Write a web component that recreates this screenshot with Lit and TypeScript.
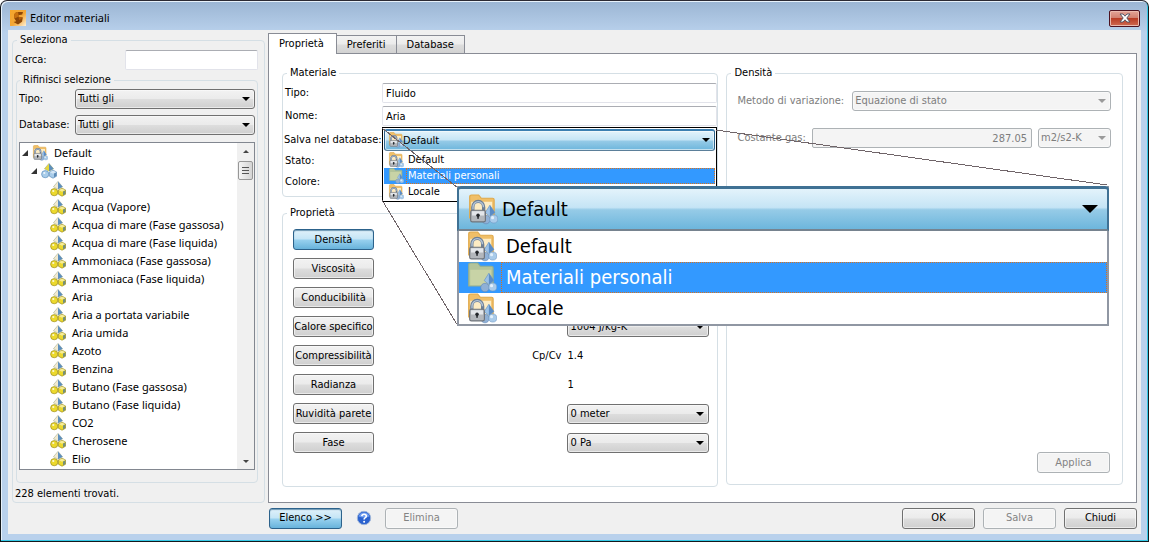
import { LitElement, html, css, svg, nothing } from 'lit';
import { customElement } from 'lit/decorators.js';
import { classMap } from 'lit/directives/class-map.js';

const folderShape = (plain: boolean) => svg`
  <path d="M1.4 1.6 Q1.4 .5 2.4 .5 H6 L7.4 2.2 H13.2 Q14 2.2 14 3 V12.4 H1.4 Z" fill=${plain ? '#b3c49a' : '#f0bf68'} stroke=${plain ? '#93ae90' : '#e0a94a'} stroke-width=".6"/>
  <path d="M2.2 4 H13 V12 H2.2 Z" fill=${plain ? '#c8d3a6' : '#fdecc4'}/>`;

const blueShapes = svg`
  <path d="M11.8 5.8 L14.4 9.6 L11.8 11.6 L9.4 9.6 Z" fill="#9cc2e8" stroke="#5d8cc0" stroke-width=".3"/>
  <path d="M11.8 5.8 L14.4 9.6 L11.8 11.6 Z" fill="#5b8cc4"/>
  <circle cx="9.8" cy="13.2" r="2.2" fill="#8fb0d6" stroke="#5f86b5" stroke-width=".3"/>
  <circle cx="13.8" cy="12.9" r="2.1" fill="#a9cbea" stroke="#6e97c4" stroke-width=".3"/>
  <circle cx="13.2" cy="12.2" r=".8" fill="#e3f0fb"/>`;

const lockIcon = html`<svg class="ico" viewBox="0 0 16 16" aria-hidden="true">
  ${folderShape(false)}${blueShapes}
  <path d="M3 8.8 V6.8 a2.8 3 0 0 1 5.6 0 V8.8" fill="none" stroke="#6d7f95" stroke-width="1.7"/>
  <path d="M3.1 8 V6.8 a2.7 2.9 0 0 1 5.4 0" fill="none" stroke="#b4c5d8" stroke-width=".7"/>
  <rect x="1.9" y="8.4" width="7.6" height="6" rx=".9" fill="#b3b7bc" stroke="#6f747b" stroke-width=".6"/>
  <rect x="2.6" y="8.9" width="6.2" height="2.2" fill="#e3e6ea"/>
  <circle cx="5.7" cy="11" r=".9" fill="#23262b"/><rect x="5.3" y="11" width=".8" height="1.8" fill="#23262b"/>
</svg>`;

const folderIcon = html`<svg class="ico" viewBox="0 0 16 16" aria-hidden="true">${folderShape(true)}${blueShapes}</svg>`;

const shapesIcon = (ball: string, edge: string, face: string) => html`<svg class="ico" viewBox="0 0 16 16" aria-hidden="true">
  <path d="M8 .4 L12.6 5.8 L8 8.2 L3.4 5.8 Z" fill=${face} stroke="#9aa27c" stroke-width=".5"/>
  <path d="M8 .4 L12.6 5.8 L8 8.2 Z" fill="#5d8fbe"/>
  <circle cx="4.2" cy="11.2" r="3.6" fill=${ball} stroke=${edge} stroke-width=".7"/>
  <circle cx="3.3" cy="10" r="1.1" fill="#fff" opacity=".8"/>
  <path d="M12 7.2 L15.6 9 V13.2 L12 15.2 L8.4 13.2 V9 Z" fill=${ball} stroke=${edge} stroke-width=".7"/>
  <path d="M8.7 9.1 L12 7.5 L15.3 9.1 L12 10.8 Z" fill="#fff" opacity=".5"/>
  <path d="M13 10.6 L15.3 9.4 V13 L13 14.3 Z" fill="#3f6fa0" opacity=".7"/>
</svg>`;
const groupIcon = shapesIcon('#a9cdea', '#5f8fbd', '#e5d83f');
const itemIcon = shapesIcon('#ecd92c', '#9c8d1e', '#f2ead0');

const menu = [
  { name: 'Default', icon: lockIcon },
  { name: 'Materiali personali', icon: folderIcon, active: true },
  { name: 'Locale', icon: lockIcon },
];

const materials = [
  'Acqua', 'Acqua (Vapore)', 'Acqua di mare (Fase gassosa)', 'Acqua di mare (Fase liquida)',
  'Ammoniaca (Fase gassosa)', 'Ammoniaca (Fase liquida)', 'Aria', 'Aria a portata variabile',
  'Aria umida', 'Azoto', 'Benzina', 'Butano (Fase gassosa)', 'Butano (Fase liquida)',
  'CO2', 'Cherosene', 'Elio',
];

const properties: { name: string; on?: boolean; label?: string; value?: string; unit?: string }[] = [
  { name: 'Densità', on: true },
  { name: 'Viscosità' },
  { name: 'Conducibilità' },
  { name: 'Calore specifico', unit: '1004 J/kg-K' },
  { name: 'Compressibilità', label: 'Cp/Cv', value: '1.4' },
  { name: 'Radianza', value: '1' },
  { name: 'Ruvidità parete', unit: '0 meter' },
  { name: 'Fase', unit: '0 Pa' },
];

@customElement('app-root')
export class AppRoot extends LitElement {
  static styles = css`
    :host {
      display: block;
      font: 11px/14px 'DejaVu Sans Condensed', 'DejaVu Sans', sans-serif;
      color: #000;
    }
    * { box-sizing: border-box; }
    button, input, select { font: inherit; color: inherit; margin: 0; }
    .window {
      display: flex; flex-direction: column;
      height: 100vh; min-height: 540px;
      border: 1px solid #14181c; border-top-color: #2c2a33; border-radius: 7px 7px 0 0;
      background: linear-gradient(#9bb5d3, #b9d1ec 32px, #b9d1ec);
      box-shadow: inset -1px -1px 0 #35c9e6, inset 1px 1px 0 #e8f2fb;
      padding: 0 7px 7px;
    }
    .titlebar { display: flex; align-items: center; gap: 4px; height: 29px; padding: 5px 1px 0 2px; font: 11px/16px 'Noto Sans', sans-serif; }
    .titlebar .logo { width: 16px; height: 16px; }
    .titlebar h1 { flex: 1; margin: 0; font: inherit; }
    .close {
      width: 31px; height: 17px; padding: 0; display: grid; place-items: center;
      border: 1px solid #4d1220; border-radius: 2px;
      background: linear-gradient(#e3a598, #d17f70 47%, #b93d26 50%, #cf6a52);
      box-shadow: inset 0 0 0 1px #eab9ae;
    }
    .close svg { width: 12px; height: 10px; }
    .body { flex: 1; min-height: 0; display: grid; grid-template-columns: 253px minmax(0, 1fr); column-gap: 3px; grid-template-rows: minmax(0, 1fr) 31px; background: #f0f0f0; padding: 0 4px; }

    fieldset { min-width: 0; margin: 0; padding: 0; border: 1px solid #d5dfe5; border-radius: 4px; }
    legend { margin-left: 4px; padding: 0 3px; }
    .stack { display: flex; flex-direction: column; }
    .row { display: flex; align-items: center; }

    .side { padding-top: 3px; min-height: 0; }
    .side .outer { flex: 1; min-height: 0; }
    .search { justify-content: space-between; padding: 3px 6px 3px 2px; }
    .search input { width: 133px; height: 20px; }
    .inner { flex: 1; min-height: 0; margin: 0 6px 0 3px; padding: 0 2px 12px; }
    .inner legend { margin-left: 1px; }
    .filter { justify-content: space-between; margin-bottom: 6px; }
    .filter.first { margin-top: 2px; }
    .filter .select { width: 180px; }
    .filter:nth-of-type(2) { margin-bottom: 7px; }
    .count { padding: 4px 2px 1px; }

    .text { border: 1px solid #e2e3ea; border-top-color: #abadb3; border-radius: 2px; background: #fff; padding: 1px 3px; }
    .select { position: relative; display: block; height: 20px; }
    .select select {
      appearance: none; display: block; width: 100%; height: 100%; padding: 0 16px 0 2px;
      border: 1px solid #707070; border-radius: 3px;
      background: linear-gradient(#f2f2f2, #ebebeb 48%, #dddddd 52%, #cfcfcf);
      box-shadow: inset 0 0 0 1px #fcfcfc99;
    }
    .select::after {
      content: ''; position: absolute; right: 5px; top: 8px;
      border: 4px solid transparent; border-top-color: #000; border-bottom: 0;
      pointer-events: none;
    }
    .select.off { color: #7d7d7d; }
    .select.off select { opacity: 1; color: #7d7d7d; background: #f4f4f4; border-color: #adb2b5; }
    .select.off::after { border-top-color: #9a9a9a; }

    .tree { flex: 1; min-height: 0; display: flex; border: 1px solid #828790; background: #fff; }
    .tree ul { list-style: none; margin: 0; padding: 0; }
    .tree .rows { flex: 1; min-width: 0; overflow: hidden; padding: 1px 0 0 2px; font: 11px/18px 'Noto Sans', sans-serif; }
    .node { display: flex; align-items: center; height: 18px; gap: 6px; white-space: nowrap; }
    .node .ico { margin-left: 4px; }
    .tree .rows ul { padding-left: 9px; }
    .tree .rows ul ul { padding-left: 15px; }
    .arrow { width: 6px; height: 6px; margin-right: -6px; }
    .ico { width: 16px; height: 16px; flex: none; display: block; }
    .scroll { width: 17px; display: flex; flex-direction: column; align-items: center; background: #f0f0f0; padding: 7px 0 6px; }
    .up, .down { border: 3px solid transparent; }
    .up { border-top: 0; border-bottom-color: #444; }
    .down { border-bottom: 0; border-top-color: #444; margin-top: auto; }
    .thumb { width: 15px; height: 19px; margin-top: 8px; border: 1px solid #979797; border-radius: 2px; background: linear-gradient(90deg, #f5f5f5, #d4d4d4); display: grid; place-items: center; }
    .thumb i { width: 7px; height: 8px; background: repeating-linear-gradient(#555 0 1px, transparent 1px 3px); }

    .main { display: flex; flex-direction: column; min-height: 0; padding-top: 3px; }
    .tabs { display: flex; align-items: flex-end; height: 21px; z-index: 1; }
    .tab { height: 18px; padding: 0 10px; border: 1px solid #898c95; border-left-width: 0; border-bottom: 0; background: linear-gradient(#f3f3f3, #ebebeb 48%, #dddddd 52%, #d2d2d2); margin-bottom: 1px; }
    .tab.on { height: 21px; margin: 0; padding: 0 12px 0 10px; border-left-width: 1px; background: #fff; }
    .panel { flex: 1; min-height: 0; margin-top: -1px; display: grid; grid-template-columns: 437fr 397fr; column-gap: 8px; border: 1px solid #898c95; background: #fff; padding: 12px 13px 15px; }
    .left { display: flex; flex-direction: column; gap: 9px; min-height: 0; }

    .material { height: 131px; flex: none; padding-top: 3px; }
    .material .grid { display: grid; grid-template-columns: 99px minmax(0, 1fr); grid-template-rows: 23px 21px 24px 21px 21px; align-items: start; }
    .material label, .material .lab { padding-left: 2px; line-height: 20px; white-space: nowrap; }
    .material .for-combo { padding-left: 1px; line-height: 26px; }
    .material .text { width: 100%; height: 20px; }
    .combo { position: relative; z-index: 2; height: 24px; padding: 1px; border: 1px solid #000; border-bottom: 0; }
    .combo .select { height: 22px; }
    .combo .select select {
      padding-left: 18px; border-color: #3c7fb1 #2c628b #5b7f99; border-width: 2px 1px 1px;
      background: linear-gradient(#e3f3fb, #c5e4f5 48%, #96cbe7 52%, #6db6dc);
    }
    .combo .select::after { top: 9px; }
    .combo > .select > .ico { position: absolute; left: 4px; top: 3px; pointer-events: none; }
    .menu { list-style: none; margin: 0; padding: 0; background: #fff; }
    .small { position: absolute; left: -1px; right: -1px; top: 23px; border: 1px solid #000; border-top: 0; padding: 1px; }
    .menu li { display: flex; align-items: center; }
    .small li { height: 16px; padding-left: 4px; gap: 2px; }
    .menu li span { flex: 1; border: 1px dotted transparent; }
    .small li span { padding: 0 1px; line-height: 14px; }
    .menu li.on { background: #3399ff; color: #fff; }
    .menu li.on span { border-color: #d9721c; }
    .lines { position: absolute; left: -1px; top: -1px; width: 728px; height: 200px; pointer-events: none; z-index: 3; }
    .zoomed { position: absolute; left: 74px; top: 58px; width: 652px; z-index: 4; font-size: 20px; line-height: 26px; border: 2px solid #9097a3; border-top: 0; background: #fff; }
    .zoomed .head {
      display: flex; align-items: center; gap: 4px; margin: 0 -2px; height: 45px; padding: 0 9px 0 8px;
      border: 2px solid #3f7194; border-top-width: 3px; border-bottom: 2px solid #76838f; border-radius: 4px 4px 0 0;
      background: linear-gradient(#e3f3fb, #c5e4f5 46%, #96cbe7 52%, #6db6dc);
    }
    .zoomed .head span { flex: 1; }
    .zoomed .head::after { content: ''; border: 8px solid transparent; border-top-color: #000; border-bottom: 0; }
    .zoomed .ico { width: 31px; height: 31px; }
    .zoomed li { height: 31px; padding-left: 7px; gap: 4px; }
    .zoomed li span { padding-left: 4px; line-height: 29px; height: 31px; }

    .props { flex: 1; min-height: 0; }
    .prop { display: grid; grid-template-columns: 81px minmax(0, 1fr) 142px; align-items: center; height: 21px; margin-bottom: 8px; padding: 0 8px 0 10px; }
    .props .prop:nth-of-type(1) { margin-top: 9px; }
    .prop .tag { text-align: right; padding-right: 6px; }

    .btn { height: 21px; padding: 0; text-align: center; white-space: nowrap; border: 1px solid #707070; border-radius: 3px; background: linear-gradient(#f2f2f2, #ebebeb 48%, #dddddd 52%, #cfcfcf); box-shadow: inset 0 0 0 1px #fcfcfc99; }
    .btn.hot { border-color: #2c628b; background: linear-gradient(#e0f1fa, #c4e5f6 48%, #98d1ef 52%, #68b3db); box-shadow: inset 0 1px 1px #6d97b3; }
    .btn:disabled { color: #838383; border-color: #adb2b5; background: #f4f4f4; }

    .density { display: flex; flex-direction: column; margin-bottom: 2px; color: #7d7d7d; }
    .density legend { color: #000; }
    .density .row { padding: 0 11px 0 10px; }
    .method { margin-top: 11px; gap: 8px; }
    .method .select { flex: 1; }
    .gas { margin-top: 17px; gap: 6px; }
    .gas input { flex: 1; min-width: 0; height: 20px; text-align: right; color: #7d7d7d; background: #f4f4f4; border: 1px solid #adb2b5; border-radius: 2px; padding: 0 4px; }
    .gas .select { width: 73px; }
    .density .end { margin-top: auto; justify-content: flex-end; padding: 0 12px 11px; }
    .wide { width: 73px; }

    .foot { grid-column: 2; display: flex; align-items: center; gap: 8px; padding: 0 0 1px 1px; }
    .foot .help { width: 16px; height: 16px; margin: 0 5px 0 6px; padding: 0; border: 0; background: none; display: block; }
    .foot .gap { flex: 1; }
    .help svg { display: block; width: 16px; height: 16px; }
  `;

  private select(id: string, value: string, cls = '', label = '', icon: unknown = nothing) {
    const off = cls === 'off';
    return html`<span class=${classMap({ select: true, off })}>
      <select id=${id} ?disabled=${off} aria-label=${label || nothing}><option>${value}</option></select>${icon}
    </span>`;
  }

  private menuList(cls: string) {
    return html`<ul class="menu ${cls}" role="listbox" aria-label="Salva nel database">
      ${menu.map((m) => html`<li role="option" aria-selected=${m.active ? 'true' : 'false'} class=${classMap({ on: !!m.active })}>${m.icon}<span>${m.name}</span></li>`)}
    </ul>`;
  }

  private sidebar() {
    const arrow = html`<svg class="arrow" viewBox="0 0 6 6" aria-hidden="true"><path d="M6 0 V6 H0 Z" fill="#333"/></svg>`;
    return html`<aside class="side stack">
      <fieldset class="outer stack">
        <legend>Seleziona</legend>
        <div class="row search"><label for="search">Cerca:</label><input id="search" class="text" type="text" /></div>
        <fieldset class="inner stack">
          <legend>Rifinisci selezione</legend>
          <div class="row filter first"><label for="ftype">Tipo:</label>${this.select('ftype', 'Tutti gli')}</div>
          <div class="row filter"><label for="fdb">Database:</label>${this.select('fdb', 'Tutti gli')}</div>
          <div class="tree">
            <ul class="rows" role="tree">
              <li role="treeitem"><div class="node">${arrow}${lockIcon}<span>Default</span></div>
                <ul role="group"><li role="treeitem"><div class="node">${arrow}${groupIcon}<span>Fluido</span></div>
                  <ul role="group">
                    ${materials.map((m) => html`<li class="node" role="treeitem">${itemIcon}<span>${m}</span></li>`)}
                    <li class="node" aria-hidden="true">${itemIcon}</li>
                  </ul></li></ul>
              </li>
            </ul>
            <div class="scroll"><i class="up"></i><div class="thumb"><i></i></div><i class="down"></i></div>
          </div>
        </fieldset>
        <div class="count">228 elementi trovati.</div>
      </fieldset>
    </aside>`;
  }

  private material() {
    return html`<fieldset class="material">
      <legend>Materiale</legend>
      <div class="grid">
        <label for="type">Tipo:</label><input id="type" class="text" type="text" value="Fluido" />
        <label for="name">Nome:</label><input id="name" class="text" type="text" value="Aria" />
        <label class="for-combo" for="db">Salva nel database:</label>
        <div class="combo">
          ${this.select('db', 'Default', '', '', lockIcon)}
          ${this.menuList('small')}
          <svg class="lines" viewBox="0 0 728 200" aria-hidden="true">
            <g stroke="#6f6468" stroke-width="1" fill="none" shape-rendering="crispEdges">
              <path d="M0 1 L76 61 M0 73 L76 199 M334 3 L725 58"/>
            </g>
          </svg>
          <div class="zoomed">
            <div class="head">${lockIcon}<span>Default</span></div>
            ${this.menuList('')}
          </div>
        </div>
        <span class="lab">Stato:</span><span></span>
        <span class="lab">Colore:</span><span></span>
      </div>
    </fieldset>`;
  }

  render() {
    return html`<div class="window">
      <header class="titlebar">
        <svg class="logo" viewBox="0 0 16 16" aria-hidden="true">
          <defs><linearGradient id="lg" x1="0" y1="0" x2="1" y2="1"><stop offset="0" stop-color="#f6a62a"/><stop offset=".55" stop-color="#f3a737"/><stop offset="1" stop-color="#fff1d6"/></linearGradient></defs>
          <rect width="16" height="16" fill="url(#lg)"/>
          <path d="M4.2 5.6 Q4.4 2.2 8 2 H13 L12.2 4.6 L8.6 5.2 L8.4 6.8 L12.8 7.4 L12 11.8 L8 14.6 L3.6 12 L6.2 11.2 L4.4 8.6 Z" fill="#8d4706"/>
          <path d="M4.2 5.6 Q4.4 2.2 8 2 L8.6 5.2 L8.4 6.8 L4.4 8.6 Z" fill="#c8700f"/>
          <path d="M8.4 6.8 L12.8 7.4 L9.4 10.2 Z" fill="#b65f0a"/>
        </svg>
        <h1>Editor materiali</h1>
        <button class="close" aria-label="Chiudi finestra"><svg viewBox="0 0 12 10" aria-hidden="true"><path d="M1 1 H4 L6 3.2 L8 1 H11 L7.8 5 L11 9 H8 L6 6.8 L4 9 H1 L4.2 5 Z" fill="#fff" stroke="#545667" stroke-width="1"/></svg></button>
      </header>
      <div class="body">
        ${this.sidebar()}
        <main class="main">
          <div class="tabs" role="tablist">
            <button class="tab on" role="tab" aria-selected="true">Proprietà</button>
            <button class="tab" role="tab" aria-selected="false">Preferiti</button>
            <button class="tab" role="tab" aria-selected="false">Database</button>
          </div>
          <section class="panel">
            <div class="left">
              ${this.material()}
              <fieldset class="props">
                <legend>Proprietà</legend>
                ${properties.map((p) => html`<div class="prop">
                  <button class=${classMap({ btn: true, hot: !!p.on })}>${p.name}</button>
                  <span class="tag">${p.label ?? nothing}</span>
                  ${p.unit ? this.select('u-' + p.name[0], p.unit, '', p.name) : html`<span>${p.value ?? nothing}</span>`}
                </div>`)}
              </fieldset>
            </div>
            <fieldset class="density">
              <legend>Densità</legend>
              <div class="row method"><label for="method">Metodo di variazione:</label>${this.select('method', 'Equazione di stato', 'off')}</div>
              <div class="row gas"><label for="gas">Costante gas:</label><input id="gas" type="text" value="287.05" disabled />${this.select('gasunit', 'm2/s2-K', 'off', 'Unità')}</div>
              <div class="row end"><button class="btn wide" disabled>Applica</button></div>
            </fieldset>
          </section>
        </main>
        <footer class="foot">
          <button class="btn hot wide">Elenco &gt;&gt;</button>
          <button class="help" aria-label="Guida"><svg viewBox="0 0 16 16" aria-hidden="true">
            <circle cx="8" cy="8" r="6.7" fill="#2b62cf" stroke="#9db4d8" stroke-width="1"/>
            <path d="M2.6 6.6 A5.6 5.6 0 0 1 13.4 6.6 Q8 8.4 2.6 6.6 Z" fill="#6f9df0"/>
            <path d="M5.8 6.2 Q6 4.2 8.1 4.2 Q10.3 4.2 10.3 6 Q10.3 7.2 9 7.9 Q8.1 8.4 8.1 9.4" fill="none" stroke="#fff" stroke-width="1.6"/>
            <circle cx="8.1" cy="11.7" r="1" fill="#fff"/></svg></button>
          <button class="btn wide" disabled>Elimina</button>
          <span class="gap"></span>
          <button class="btn wide">OK</button>
          <button class="btn wide" disabled>Salva</button>
          <button class="btn wide">Chiudi</button>
        </footer>
      </div>
    </div>`;
  }
}
